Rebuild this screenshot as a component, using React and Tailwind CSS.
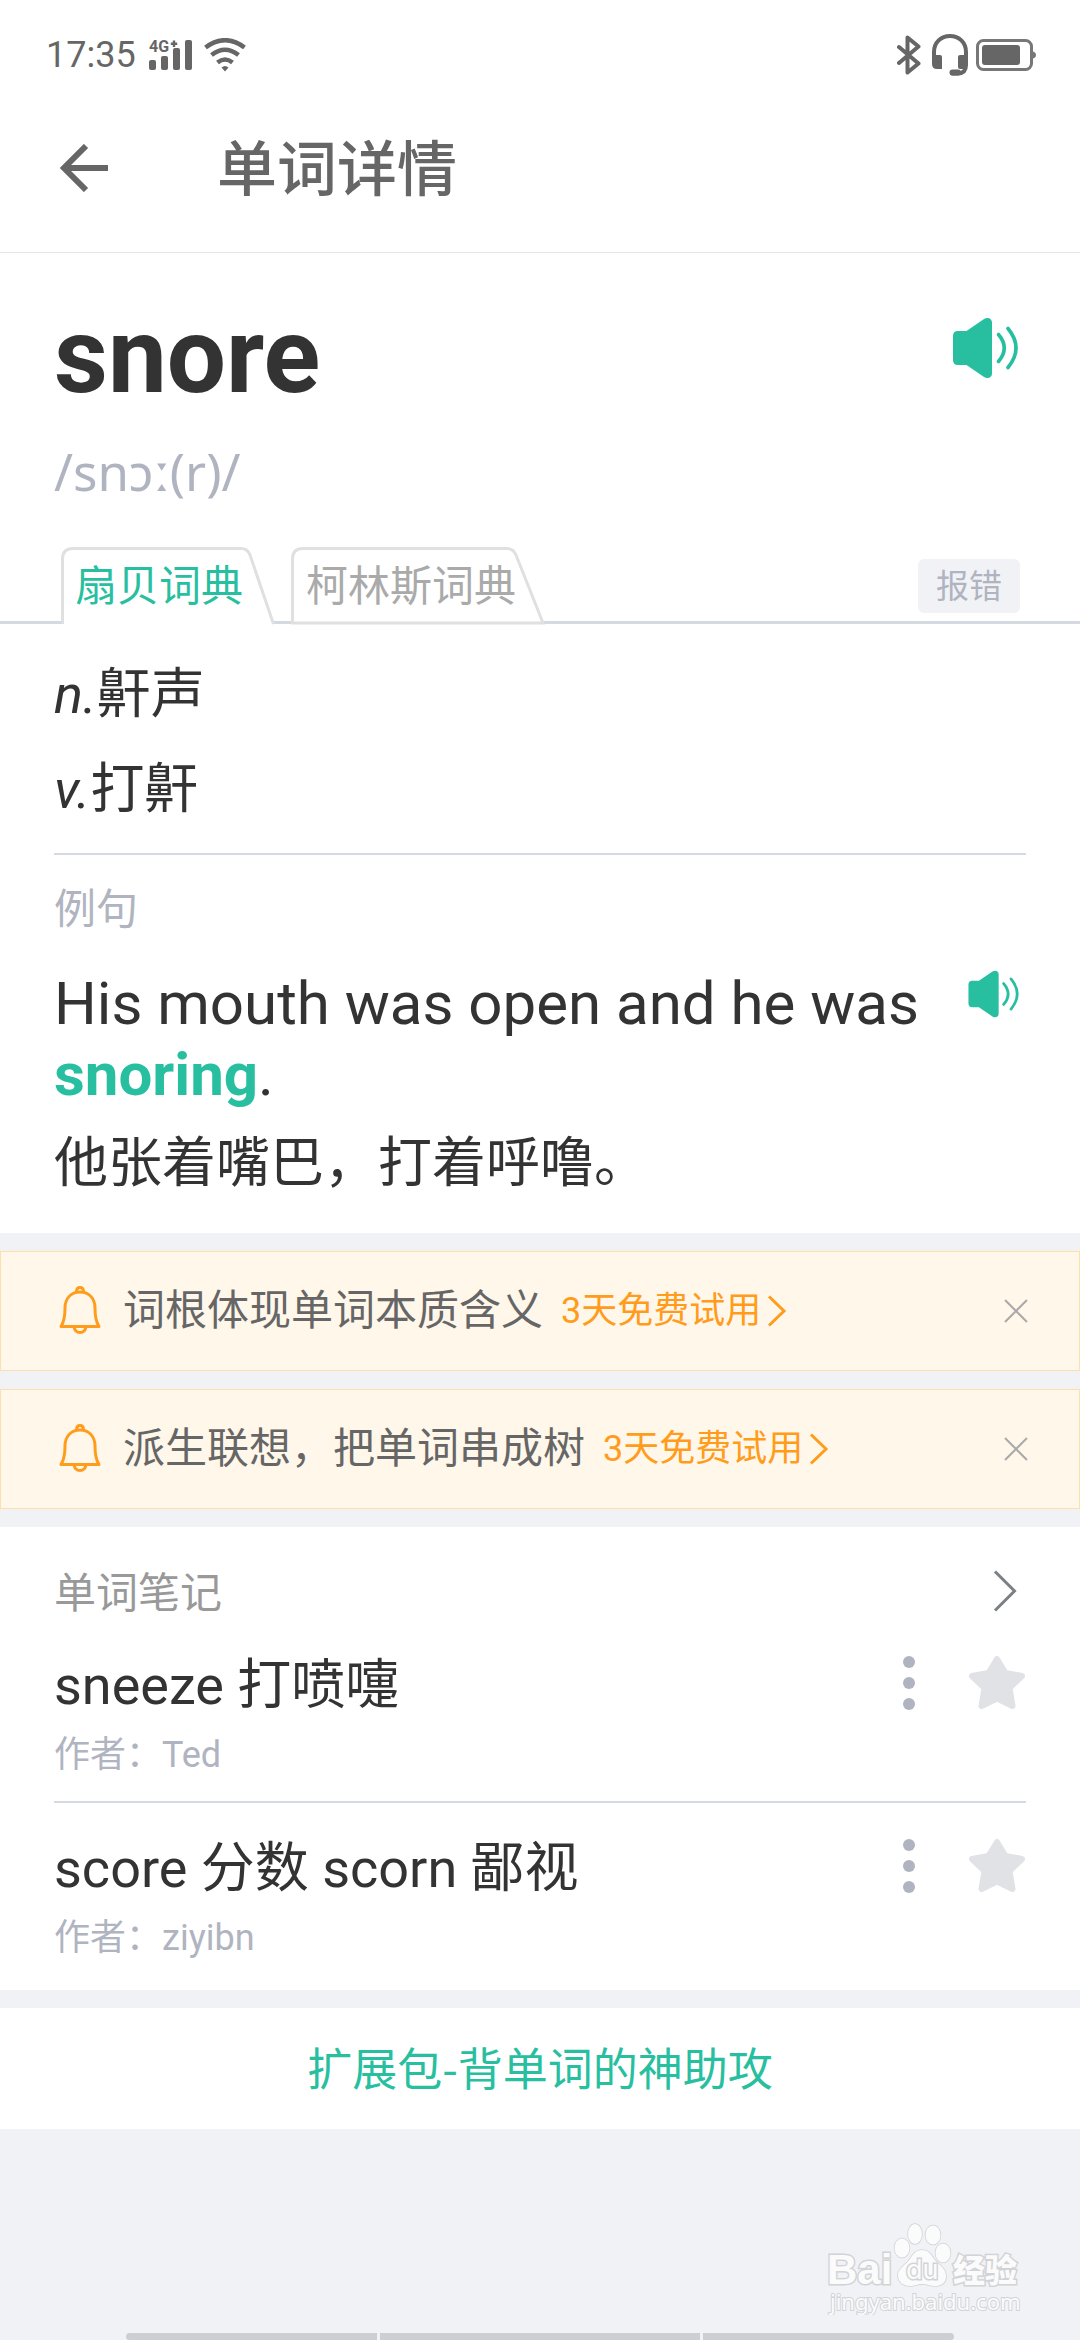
import React from 'react';

const promos = [
  { id: 'root', text: '词根体现单词本质含义' },
  { id: 'derive', text: '派生联想，把单词串成树' },
];

const notes = [
  { id: 1, content: 'sneeze 打喷嚏', author: 'Ted' },
  { id: 2, content: 'score 分数 scorn 鄙视', author: 'ziyibn' },
];

function Speaker({ className }) {
  return (
    <svg viewBox="0 0 68 62" className={className} fill="none" aria-hidden="true">
      <path
        d="M6 14H14.500L32 2C36-.5 40 1.500 40 5.500V56.500C40 60.500 36 62.500 32 60L14.500 48H6Q1 48 1 43V19Q1 14 6 14Z"
        fill="#28bfa0"
      />
      <path d="M46.500 17.500Q58 31 46.500 44.500M56 11.500Q72 31 56 50.500" stroke="#28bfa0" strokeWidth="3.600" strokeLinecap="round" />
    </svg>
  );
}

function Bell() {
  return (
    <svg viewBox="0 0 42 50" className="h-[50px] w-[42px]" fill="none" stroke="#ff9c1c" strokeWidth="3" strokeLinejoin="round" aria-hidden="true">
      <path d="M21 6C11.500 6 6 13 6 22C6 31 5 36 2 40.500H40C37 36 36 31 36 22C36 13 30.500 6 21 6Z" />
      <path d="M17.500 6Q17.500 1.600 21 1.600Q24.500 1.600 24.500 6M15 41Q16 46.400 21 46.400Q26 46.400 27 41" />
    </svg>
  );
}

function Star() {
  return (
    <svg viewBox="0 0 58 56" className="h-14 w-[58px]" aria-hidden="true">
      <path
        d="M29 4L37.500 18L54 21L41.500 33L44.500 51L29 43.500L13.500 51L16.500 33L4 21L20.500 18Z"
        fill="#e1e2e6"
        stroke="#e1e2e6"
        strokeWidth="6"
        strokeLinejoin="round"
      />
    </svg>
  );
}

function StatusBar() {
  return (
    <div className="flex h-[84px] items-center justify-between pt-[26px] pr-11 pl-[46px] text-[#666]">
      <div className="flex items-center">
        <span className="text-[36px] leading-[42px]">17:35</span>
        <svg viewBox="0 0 44 34" className="ml-[13px] h-[34px] w-[44px]" fill="currentColor" aria-hidden="true">
          <text x="0" y="14" fontSize="16" fontWeight="700">4G</text>
          <path d="M25 2.500V9M21.800 5.700H28.200" stroke="currentColor" strokeWidth="2.400" />
          <rect x="0" y="22" width="7" height="10" rx="2" />
          <rect x="12" y="18" width="7" height="14" rx="2" />
          <rect x="24" y="10" width="7" height="22" rx="2" />
          <rect x="36" y="2" width="7" height="30" rx="2" />
        </svg>
        <svg viewBox="0 0 42 34" className="ml-[11px] h-[34px] w-[42px]" fill="none" stroke="currentColor" strokeWidth="4.600" aria-hidden="true">
          <path d="M1.500 9.500Q21-5 40.500 9.500M7.500 17Q21 6.500 34.500 17M13.500 24.500Q21 18.500 28.500 24.500" />
          <path d="M17.500 29.500Q21 26.500 24.500 29.500L21 33.500Z" fill="currentColor" stroke="none" />
        </svg>
      </div>

      <div className="flex items-center">
        <svg viewBox="0 0 24 40" className="h-10 w-6" fill="none" stroke="currentColor" strokeWidth="4" strokeLinecap="round" strokeLinejoin="round" aria-hidden="true">
          <path d="M2 12L21.500 28.500L10.500 37.500V2.500L21.500 11.500L2 28" />
        </svg>
        <svg viewBox="0 0 38 42" className="ml-[10px] h-[42px] w-[38px]" fill="none" stroke="currentColor" aria-hidden="true">
          <path d="M3 24V18C3 8.500 10 2 19 2S35 8.500 35 18V31Q35 39 27 39.500H21" strokeWidth="4" strokeLinecap="round" />
          <path d="M1 21H9Q11 21 11 23V35H6Q1 35 1 30ZM37 21H29Q27 21 27 23V33Q27 35 29 35H35L37 30Z" fill="currentColor" stroke="none" />
          <path d="M21.500 38.500H27" strokeWidth="6" strokeLinecap="round" />
        </svg>
        <svg viewBox="0 0 60 32" className="ml-[7px] h-8 w-[60px]" fill="none" aria-hidden="true">
          <rect x="1.500" y="1.500" width="54" height="29" rx="6" stroke="#777" strokeWidth="3" />
          <rect x="6" y="6" width="38" height="20" rx="3" fill="currentColor" />
          <path d="M57 12.500Q60 13.500 60 16T57 19.500Z" fill="#777" />
        </svg>
      </div>
    </div>
  );
}

function DictTab({ active, outline, className, children }) {
  return (
    <button type="button" role="tab" aria-selected={active} className={`relative h-[78px] pt-[2px] text-left text-[42px] leading-[76px] ${className}`}>
      {outline}
      <span className={active ? 'relative text-[#28bfa0]' : 'relative text-[#aaa]'}>{children}</span>
    </button>
  );
}

function WordCard() {
  return (
    <section className="bg-white pt-11 pb-[33px]">
      <div className="flex items-start justify-between pr-[60px] pl-[54px]">
        <h1 className="text-[105px] leading-[120px] font-bold text-[#333]">snore</h1>
        <button type="button" aria-label="播放单词发音" className="mt-5">
          <Speaker className="h-[62px] w-[68px]" />
        </button>
      </div>
      <p className="mt-6 px-[54px] font-['Noto_Sans',sans-serif] text-[51px] leading-[60px] text-[#b0b4c0]">/snɔː(r)/</p>

      {/* 词典切换 */}
      <div className="mt-[46px] flex h-[77px] items-start border-b-[3px] border-[#d5d9e2] pr-[60px] pl-[61px]">
        <div role="tablist" className="flex gap-4">
          <DictTab
            active
            className="w-[214px] pl-[14px]"
            outline={
              <svg viewBox="0 0 214 78" className="absolute inset-0 h-full w-full" aria-hidden="true">
                <path d="M1.500 77V12Q1.500 1.500 12 1.500H180Q186.500 1.500 189 8L212.500 77" fill="#fff" stroke="#e0e0e0" strokeWidth="3" />
              </svg>
            }
          >
            扇贝词典
          </DictTab>
          <DictTab
            active={false}
            className="w-[254px] pl-[15px]"
            outline={
              <svg viewBox="0 0 254 78" className="absolute inset-0 h-full w-full" aria-hidden="true">
                <path d="M1.500 76V12Q1.500 1.500 12 1.500H216Q222 1.500 225 8L252 76Z" fill="#fff" stroke="#e0e0e0" strokeWidth="3" />
              </svg>
            }
          >
            柯林斯词典
          </DictTab>
        </div>
        <button type="button" className="mt-3 ml-auto h-[54px] w-[102px] rounded-md bg-[#f1f2f6] pt-[2px] text-[33px] leading-[52px] text-[#b0b4c0]">
          报错
        </button>
      </div>

      {/* 释义 */}
      <div className="px-[54px] pt-[23px] text-[54px] leading-[95px] text-[#333]">
        <p><em>n.</em>鼾声</p>
        <p><em>v.</em>打鼾</p>
      </div>

      {/* 例句 */}
      <div className="mx-[54px] mt-4 border-t-2 border-[#d5d9e2] pt-[25px]">
        <h2 className="text-[42px] leading-[60px] text-[#b0b4c0]">例句</h2>
        <div className="mt-7 flex items-start justify-between">
          <p className="flex-1 text-[60px] leading-[71px] text-[#333]">
            His mouth was open and he was <b className="text-[#28bfa0]">snoring</b>.
          </p>
          <button type="button" aria-label="播放例句" className="mt-[2px] mr-[5px]">
            <Speaker className="h-12 w-[54px]" />
          </button>
        </div>
        <p className="mt-[18px] text-[54px] leading-[72px] text-[#333]">他张着嘴巴，打着呼噜。</p>
      </div>
    </section>
  );
}

function Promo({ text }) {
  return (
    <div className="flex h-[120px] items-center border border-[#fddfae] bg-[#fff7ea] pr-[51px] pl-[58px]">
      <Bell />
      <span className="ml-[22px] text-[42px] leading-[60px] text-[#666]">{text}</span>
      <a href="#trial" className="ml-[18px] flex items-center text-[36px] leading-[60px] text-[#ff9c1c]">
        3天免费试用
        <svg viewBox="0 0 20 32" className="ml-[6px] h-8 w-5" fill="none" stroke="currentColor" strokeWidth="3" aria-hidden="true">
          <path d="M2 1.500L17 16L2 30.500" />
        </svg>
      </a>
      <button type="button" aria-label="关闭" className="ml-auto">
        <svg viewBox="0 0 24 24" className="h-6 w-6" stroke="#aaa" strokeWidth="2" aria-hidden="true">
          <path d="M1 1L23 23M23 1L1 23" />
        </svg>
      </button>
    </div>
  );
}

function Notes() {
  return (
    <section className="bg-white px-[54px] pt-[41px] pb-[6px]">
      <div className="flex items-start justify-between pr-[9px]">
        <h2 className="text-[42px] leading-[52px] text-[#999]">单词笔记</h2>
        <button type="button" aria-label="查看全部笔记" className="mt-[2px]">
          <svg viewBox="0 0 24 42" className="h-[42px] w-6" fill="none" stroke="#7b7f86" strokeWidth="3" aria-hidden="true">
            <path d="M2 1.500L21.500 21L2 40.500" />
          </svg>
        </button>
      </div>
      <ul className="divide-y-2 divide-[#d5d9e2]">
        {notes.map((note) => (
          <li key={note.id} className="flex justify-between pt-[30px] pb-[22px]">
            <div>
              <p className="text-[54px] leading-[72px] text-[#333]">{note.content}</p>
              <p className="mt-[9px] text-[36px] leading-[48px] text-[#b0b4c0]">作者：{note.author}</p>
            </div>
            <div className="flex h-[66px] items-center gap-[53px]">
              <button type="button" aria-label="更多" className="flex flex-col gap-[9px]">
                <span className="h-3 w-3 rounded-full bg-[#b0b4c0]" />
                <span className="h-3 w-3 rounded-full bg-[#b0b4c0]" />
                <span className="h-3 w-3 rounded-full bg-[#b0b4c0]" />
              </button>
              <button type="button" aria-label="收藏">
                <Star />
              </button>
            </div>
          </li>
        ))}
      </ul>
    </section>
  );
}

function Watermark() {
  return (
    <svg viewBox="0 0 200 96" className="absolute right-[56px] bottom-[25px] h-24 w-[200px]" fill="#fbfbfc" stroke="#d2d3d6" strokeWidth="1.500" aria-hidden="true">
      <g paintOrder="stroke">
        <text x="3" y="65" fontSize="42" fontWeight="700" strokeWidth="3" fontFamily="Liberation Sans, sans-serif">Bai</text>
        <ellipse cx="78" cy="29" rx="7.500" ry="9.500" />
        <ellipse cx="91" cy="15" rx="7" ry="10" />
        <ellipse cx="109" cy="16" rx="7.500" ry="9.500" />
        <ellipse cx="119" cy="34" rx="7.500" ry="9.500" />
        <path d="M98 31C104 31 107 35 110 40C115 46 122 49 122 57C122 65 116 67 111 67C106 67 103 65 98 65S91 67 86 67C79 67 74 63 74 56C74 49 82 46 86 40C89 35 92 31 98 31Z" />
        <text x="82" y="60" fontSize="27" strokeWidth="3" fontFamily="Inter, sans-serif">du</text>
        <text x="129" y="63" fontSize="32" fontWeight="900" strokeWidth="3" fontFamily="Noto Sans CJK SC, sans-serif">经验</text>
        <text x="6" y="91" fontSize="22" strokeWidth="2" fontFamily="Noto Sans, sans-serif">jingyan.baidu.com</text>
      </g>
    </svg>
  );
}

export default function App() {
  return (
    <div className="relative flex min-h-screen flex-col bg-[#f1f2f6] font-['Roboto','Noto_Sans_CJK_SC',sans-serif]">
      <header className="border-b border-[#e6e6e6] bg-white">
        <StatusBar />
        <div className="flex h-[168px] items-center pl-[60px]">
          <button type="button" aria-label="返回">
            <svg viewBox="0 0 48 48" className="h-12 w-12" fill="none" stroke="#666" strokeWidth="6" aria-hidden="true">
              <path d="M48 24H5M26 2L4 24L26 46" />
            </svg>
          </button>
          <h1 className="ml-[109px] pt-[5px] text-[60px] leading-[72px] font-medium text-[#666]">单词详情</h1>
        </div>
      </header>

      <main className="flex flex-col gap-[18px]">
        <WordCard />
        {promos.map((promo) => (
          <Promo key={promo.id} text={promo.text} />
        ))}
        <Notes />
        <a href="#packs" className="bg-white pt-[29px] pb-8 text-center font-['Noto_Sans_CJK_SC',sans-serif] text-[45px] leading-[60px] text-[#28bfa0]">
          扩展包-背单词的神助攻
        </a>
      </main>

      <Watermark />

      {/* 底部手势条 */}
      <div className="mt-auto flex gap-[3px] px-[126px]">
        <span className="h-[7px] w-[251px] rounded-l-sm bg-[#cdced1]" />
        <span className="h-[7px] flex-1 bg-[#cdced1]" />
        <span className="h-[7px] w-[251px] rounded-r-sm bg-[#cdced1]" />
      </div>
    </div>
  );
}
